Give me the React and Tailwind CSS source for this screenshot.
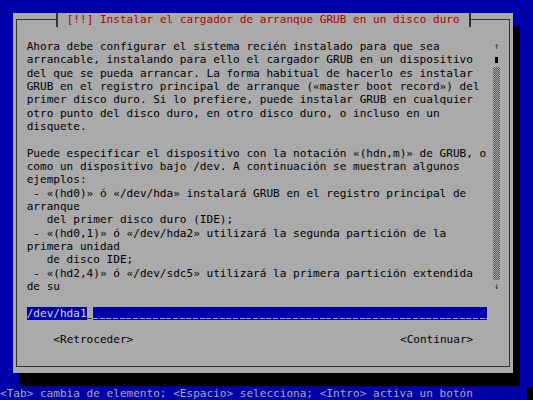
const lines = [
  'Ahora debe configurar el sistema recién instalado para que sea',
  'arrancable, instalando para ello el cargador GRUB en un dispositivo',
  'del que se pueda arrancar. La forma habitual de hacerlo es instalar',
  'GRUB en el registro principal de arranque («master boot record») del',
  'primer disco duro. Si lo prefiere, puede instalar GRUB en cualquier',
  'otro punto del disco duro, en otro disco duro, o incluso en un',
  'disquete.',
  '',
  'Puede especificar el dispositivo con la notación «(hdn,m)» de GRUB, o',
  'como un dispositivo bajo /dev. A continuación se muestran algunos',
  'ejemplos:',
  ' - «(hd0)» ó «/dev/hda» instalará GRUB en el registro principal de',
  'arranque',
  '   del primer disco duro (IDE);',
  ' - «(hd0,1)» ó «/dev/hda2» utilizará la segunda partición de la',
  'primera unidad',
  '   de disco IDE;',
  ' - «(hd2,4)» ó «/dev/sdc5» utilizará la primera partición extendida',
  'de su',
]

function Scrollbar() {
  return (
    <div className="w-[6.667px] flex flex-col text-[#222]">
      <div className="h-[13.333px] flex items-center justify-center text-[9px]">↑</div>
      <div className="h-[13.333px] flex items-center justify-center">
        <div className="w-[3px] h-[6px] bg-black" />
      </div>
      <div className="h-[213.333px] bg-[repeating-conic-gradient(#555_0_25%,#aaa_0_50%)] bg-[length:2px_2px]" />
      <div className="h-[13.333px] flex items-center justify-center text-[9px]">↓</div>
    </div>
  )
}

export default function App() {
  return (
    <div className="w-[533px] h-[400px] bg-[#0000aa] overflow-hidden flex flex-col font-['DejaVu_Sans_Mono',monospace] text-[11.07px] leading-[13.333px]">
      {/* dialog */}
      <div className="ml-[13.333px] mt-[13.333px] w-[500px] h-[360px] shrink-0 bg-[#aaaaaa] shadow-[6.667px_13.333px_0_#000] px-[3px] py-[6px]">
        <div className="relative h-full border border-[#333] flex flex-col pl-[9.333px] pt-[19.667px] text-black">
          <div className="absolute left-[38.333px] top-[-7px] h-[13.333px] bg-[#aaaaaa] border-l-2 border-r-2 border-[#333] px-[9px] text-[#aa0000] whitespace-pre">
            [!!] Instalar el cargador de arranque GRUB en un disco duro
          </div>

          <div className="flex">
            <div className="w-[466.667px]">
              {lines.map((l, i) => (
                <div key={i} className="h-[13.333px] whitespace-pre">{l}</div>
              ))}
            </div>
            <Scrollbar />
          </div>

          {/* input */}
          <div className="mt-[13.333px] w-[460px] h-[13.333px] flex">
            <div className="w-[60px] bg-[#0000aa] text-[#d8d8d8] whitespace-pre">/dev/hda1</div>
            <div className="w-[6.667px] bg-[#aaaaaa] flex flex-col justify-end pb-[1px]">
              <div className="h-px w-[5px] bg-[#333]" />
            </div>
            <div className="flex-1 bg-[#0000aa] flex flex-col justify-end pb-[1px]">
              <div className="h-px bg-[repeating-linear-gradient(90deg,#a8a8a8_0_5px,transparent_5px_6.667px)]" />
            </div>
          </div>

          {/* buttons */}
          <div className="mt-[13.333px] h-[13.333px] flex whitespace-pre">
            <span className="ml-[26.667px] w-[80px]">&lt;Retroceder&gt;</span>
            <span className="ml-[266.667px]">&lt;Continuar&gt;</span>
          </div>
        </div>
      </div>

      {/* status line */}
      <div className="mt-[13.333px] h-[13.333px] flex">
        <div className="w-[526.667px] text-[#aaaaaa] whitespace-pre">
          &lt;Tab&gt; cambia de elemento; &lt;Espacio&gt; selecciona; &lt;Intro&gt; activa un botón
        </div>
        <div className="flex-1 bg-black" />
      </div>
    </div>
  )
}
